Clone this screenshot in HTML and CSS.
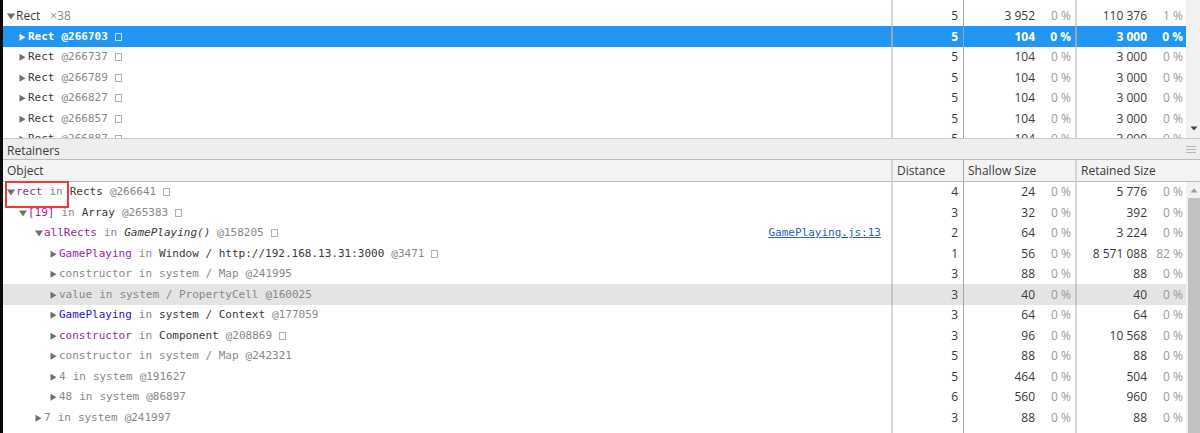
FILE: index.html
```html
<!DOCTYPE html>
<html lang="en">
<head>
<meta charset="utf-8">
<title>Heap snapshot</title>
<link rel="stylesheet" href="styles.css">
</head>
<body>
<svg class="defs" aria-hidden="true">
  <symbol id="open" viewBox="0 0 9 10"><path d="M0 2.5h8L4 8.5z"/></symbol>
  <symbol id="shut" viewBox="0 0 9 10"><path d="M0.5 1.8v7l6-3.5z"/></symbol>
</svg>
<main class="panel">
  <section class="pane objects" aria-label="Objects">
    <table class="grid">
      <colgroup><col><col class="c-dist"><col class="c-shallow"><col class="c-retained"></colgroup>
      <tbody id="objects"></tbody>
    </table>
    <div class="scroll"><svg class="arrow-down" viewBox="0 0 8 5"><path d="M0.5 0.5h7L4 4.5z"/></svg></div>
  </section>
  <header class="title">
    <span>Retainers</span>
    <button class="grip" aria-label="Resize"><i></i><i></i><i></i></button>
  </header>
  <table class="grid head">
    <colgroup><col><col class="c-dist"><col class="c-shallow"><col class="c-last"></colgroup>
    <thead><tr><th>Object</th><th>Distance</th><th>Shallow Size</th><th>Retained Size</th></tr></thead>
  </table>
  <section class="pane retainers" aria-label="Retainers">
    <table class="grid">
      <colgroup><col><col class="c-dist"><col class="c-shallow"><col class="c-retained"></colgroup>
      <tbody id="retainers"></tbody>
    </table>
    <div class="scroll track"><svg class="arrow-up" viewBox="0 0 8 5"><path d="M0.5 4.5h7L4 0.5z"/></svg><div class="thumb"></div></div>
  </section>
</main>
<script src="app.js"></script>
</body>
</html>
```
FILE: styles.css
```css
* { box-sizing: border-box; }
body {
  margin: 0;
  background: #fff;
  color: #3a3a3a;
  font: 12px/20px "Open Sans", "Noto Sans", sans-serif;
}
button { margin: 0; padding: 0; border: 0; background: none; }
.defs { position: absolute; width: 0; height: 0; }
.panel {
  display: flex;
  flex-direction: column;
  height: 100vh;
  border-left: 3px solid #0a0a0a;
}
.pane { display: flex; overflow: hidden; }
.objects { flex: 0 0 138px; }
.retainers { flex: 1; min-height: 0; overflow: visible; }

.grid {
  flex: 1;
  width: 100%;
  table-layout: fixed;
  border-collapse: separate;
  border-spacing: 0;
}
.c-dist { width: 72px; }
.c-shallow { width: 112px; }
.c-retained { width: 111px; }
.c-last { width: 125px; }
td, th { padding: 0; text-align: right; white-space: nowrap; font-weight: 400; }
td { height: 20px; line-height: 20px; vertical-align: top; }
tr.tall > td { height: 21px; line-height: 21px; }
td:nth-child(2), th:nth-child(2),
td:nth-child(4), th:nth-child(4) { border-left: 2px solid #d6d6d6; }
td:nth-child(3), th:nth-child(3) { border-left: 1px solid #a8a8a8; }
td:nth-child(2) { padding-right: 5px; }
td:nth-child(3) { padding-right: 4px; }
td:nth-child(4) { padding-right: 3px; }
tr.lead > td { height: 6px; line-height: 6px; }
tr.fill > td { height: auto; line-height: 0; }
.pct { display: inline-block; width: 36px; color: #999; }

.node {
  position: relative;
  display: flex;
  gap: 7px;
  padding-right: 10px;
  font-family: "DejaVu Sans Mono", monospace;
  font-size: 11px;
}
.l0 { padding-left: 4px; }
.l1 { padding-left: 16px; }
.l2 { padding-left: 32px; }
.l3 { padding-left: 47px; }
.first { display: flex; }
.plain { gap: 10px; font-family: "Open Sans", "Noto Sans", sans-serif; font-size: 12px; }
.toggle { display: flex; align-items: center; width: 9px; }
.toggle svg { width: 9px; height: 10px; fill: #6e6e6e; }
.dim, .id { color: #888; }
.prop { color: #932a9c; }
.ctx { color: #2c12d2; }
.fn { font-style: italic; }
.box { align-self: center; width: 7px; height: 8px; border: 1px solid #b0b0b0; }
.node a { margin-left: auto; color: #2a62cf; }
.mark {
  position: absolute;
  left: 2px;
  top: -1px;
  width: 64px;
  height: 27px;
  border: 2px solid #fa3434;
}

.selected > td { background: #2196f3; color: #fff; font-weight: 700; }
.selected > td:nth-child(n+2) { border-color: #8fa9bd; }
.selected .pct, .selected .id { color: #fff; }
.selected svg { fill: #fff; }
.selected .box { border-color: #b9dffb; }
.hover > td { background: #e4e4e4; }
.hover > td:nth-child(even) { border-color: #c4c4c4; }

.title {
  display: flex;
  align-items: center;
  justify-content: space-between;
  flex: none;
  padding: 4px 4px 0;
  border-top: 1px solid #ccc;
  background: #eee;
  line-height: 16px;
}
.grip { display: flex; flex-direction: column; gap: 2px; width: 10px; padding-bottom: 4px; }
.grip i { height: 1px; background: #b4b4b4; }
.head { flex: none; border-top: 1px solid #bbb; border-bottom: 1px solid #bbb; background: #f3f3f3; }
.head th { height: 21px; padding-left: 4px; text-align: left; }

.scroll { display: flex; flex-direction: column; align-items: center; width: 14px; background: #f1f1f1; }
.arrow-down { width: 8px; height: 5px; margin: auto 0 7px 2px; fill: #444; }
.arrow-up { width: 8px; height: 5px; margin: 6px 0 5px 2px; flex: none; fill: #999; }
.thumb { flex: 1; align-self: flex-end; width: 12px; background: #c1c1c1; }
```
FILE: app.js
```javascript
const node = (o) => {
  const s = (cls, t) => t ? `<span class="${cls}">${t}</span>` : "";
  return `<div class="node l${o.l} ${o.plain ? "plain" : ""}">` +
    `<span class="first"><button class="toggle" aria-label="Toggle"><svg><use href="#${o.open ? "open" : "shut"}"/></svg></button>${s(o.k || "name", o.n)}</span>` +
    s("dim", o.p && "in") + s(o.pk || "name", o.p) + s("id", o.id) +
    (o.box ? '<span class="box"></span>' : "") +
    (o.link ? `<a href="#">${o.link}</a>` : "") +
    (o.mark ? '<span class="mark"></span>' : "") + "</div>";
};
const row = (o, i) => `<tr class="${i % 2 ? "tall" : ""} ${o.c || ""}"><td>${node(o)}</td><td>${o.d}</td>` +
  `<td>${o.s}<span class="pct">0 %</span></td>` +
  `<td>${o.r}<span class="pct">${o.rp || 0} %</span></td></tr>`;
const blank = (c) => `<tr class="${c}"><td></td><td></td><td></td><td></td></tr>`;

const objects = [{ l: 0, open: 1, plain: 1, n: "Rect", id: "×38", d: 5, s: "3 952", r: "110 376", rp: 1 }];
["266703", "266737", "266789", "266827", "266857", "266887"].forEach((id, i) =>
  objects.push({ l: 1, n: "Rect", id: "@" + id, box: 1, d: 5, s: 104, r: "3 000", c: i ? "" : "selected" }));

const retainers = [
  { l: 0, open: 1, k: "prop", n: "rect", p: "Rects", id: "@266641", box: 1, mark: 1, d: 4, s: 24, r: "5 776" },
  { l: 1, open: 1, k: "prop", n: "[19]", p: "Array", id: "@265383", box: 1, d: 3, s: 32, r: 392 },
  { l: 2, open: 1, k: "prop", n: "allRects", p: "GamePlaying()", pk: "fn", id: "@158205", box: 1, link: "GamePlaying.js:13", d: 2, s: 64, r: "3 224" },
  { l: 3, k: "prop", n: "GamePlaying", p: "Window / http://192.168.13.31:3000", id: "@3471", box: 1, d: 1, s: 56, r: "8 571 088", rp: 82 },
  { l: 3, k: "dim", n: "constructor", p: "system / Map", pk: "dim", id: "@241995", d: 3, s: 88, r: 88 },
  { l: 3, k: "dim", n: "value", p: "system / PropertyCell", pk: "dim", id: "@160025", d: 3, s: 40, r: 40, c: "hover" },
  { l: 3, k: "ctx", n: "GamePlaying", p: "system / Context", id: "@177059", d: 3, s: 64, r: 64 },
  { l: 3, k: "prop", n: "constructor", p: "Component", id: "@208869", box: 1, d: 3, s: 96, r: "10 568" },
  { l: 3, k: "dim", n: "constructor", p: "system / Map", pk: "dim", id: "@242321", d: 5, s: 88, r: 88 },
  { l: 3, k: "dim", n: "4", p: "system", pk: "dim", id: "@191627", d: 5, s: 464, r: 504 },
  { l: 3, k: "dim", n: "48", p: "system", pk: "dim", id: "@86897", d: 6, s: 560, r: 960 },
  { l: 2, k: "dim", n: "7", p: "system", pk: "dim", id: "@241997", d: 3, s: 88, r: 88 }
];
document.getElementById("objects").innerHTML = blank("lead") + objects.map(row).join("");
document.getElementById("retainers").innerHTML = retainers.map(row).join("") + blank("fill");
```
